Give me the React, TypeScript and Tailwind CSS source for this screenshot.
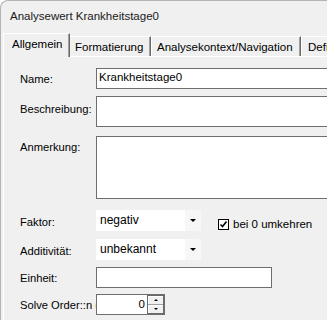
import React from "react";

function Combo({ value }: { value: string }) {
  return (
    <div className="flex h-[21px] w-[105px] bg-white">
      <div className="flex-1 pl-[4px] leading-[21px] text-[12px] text-black">{value}</div>
      <div className="flex w-[16px] items-center justify-center bg-[#f7f7f7]">
        <div className="h-0 w-0 border-l-[3px] border-r-[3px] border-t-[3px] border-l-transparent border-r-transparent border-t-black" />
      </div>
    </div>
  );
}

function Label({ text, mt }: { text: string; mt: string }) {
  return (
    <div className={`w-[76px] shrink-0 overflow-hidden whitespace-nowrap text-[11.2px] leading-[16px] text-black ${mt}`}>
      {text}
    </div>
  );
}

export default function App() {
  return (
    <div
      className="h-[320px] w-[327px] overflow-hidden rounded-tl-[8px] border-l border-t border-[#b4b4b4] bg-[#f0f0f0] text-black"
      style={{ fontFamily: "'Liberation Sans', Arial, sans-serif" }}
    >
      <div className="h-[32px] pl-[9px] pt-[7px] text-[11.5px] leading-[16px] text-[#1a1a1a]">
        Analysewert Krankheitstage0
      </div>
      <div className="relative z-10 flex h-[23px] items-end pl-[2px] text-[11.5px] leading-[16px] whitespace-nowrap">
        <div className="-mb-px h-[24px] w-[67px] shrink-0 border-l border-t border-r border-l-white border-t-white border-r-[#696969] bg-[#f0f0f0] pl-[8px] pt-[2px] shadow-[inset_-1px_0_0_#a0a0a0]">
          Allgemein
        </div>
        <div className="h-[20px] w-[81px] shrink-0 border-t border-r border-t-white border-r-[#696969] pl-[5px] pt-[2px] shadow-[inset_-1px_0_0_#a0a0a0]">
          Formatierung
        </div>
        <div className="h-[20px] w-[150px] shrink-0 border-l border-t border-r border-l-white border-t-white border-r-[#696969] pl-[5px] pt-[2px] shadow-[inset_-1px_0_0_#a0a0a0]">
          Analysekontext/Navigation
        </div>
        <div className="h-[20px] w-[70px] shrink-0 border-l border-t border-l-white border-t-white pl-[6px] pt-[2px]">
          Definition
        </div>
      </div>
      <div className="ml-[2px] h-[300px] border-l border-t border-white pl-[16px] pt-[11px]">
        <div className="flex items-start">
          <Label text="Name:" mt="mt-[3px]" />
          <div className="h-[21px] w-[240px] shrink-0 border border-[#6e6e6e] bg-white pl-[2px] text-[11.5px] leading-[17px]">
            Krankheitstage0
          </div>
        </div>
        <div className="mt-[7px] flex items-start">
          <Label text="Beschreibung:" mt="mt-[5px]" />
          <div className="h-[31px] w-[240px] shrink-0 border border-[#6e6e6e] bg-white" />
        </div>
        <div className="mt-[9px] flex items-start">
          <Label text="Anmerkung:" mt="mt-[3px]" />
          <div className="h-[63px] w-[240px] shrink-0 border border-[#6e6e6e] bg-white" />
        </div>
        <div className="mt-[11px] flex items-start">
          <Label text="Faktor:" mt="mt-[4px]" />
          <Combo value="negativ" />
          <div className="ml-[17px] mt-[6px] flex items-center">
            <div className="flex h-[11px] w-[11px] items-center justify-center border border-black bg-white">
              <svg width="9" height="9" viewBox="0 0 9 9">
                <path d="M1.5 4.5 L3.5 6.5 L7.5 1.5" fill="none" stroke="#000" strokeWidth="1.6" />
              </svg>
            </div>
            <span className="ml-[4px] text-[11.5px] leading-[16px]">bei 0 umkehren</span>
          </div>
        </div>
        <div className="mt-[7px] flex items-start">
          <Label text="Additivität:" mt="mt-[4px]" />
          <Combo value="unbekannt" />
        </div>
        <div className="mt-[7px] flex items-start">
          <Label text="Einheit:" mt="mt-[3px]" />
          <div className="h-[21px] w-[176px] shrink-0 border border-[#6e6e6e] bg-white" />
        </div>
        <div className="mt-[6px] flex items-start">
          <Label text="Solve Order::n (Lösungsreihenfolge):" mt="mt-[3px]" />
          <div className="flex h-[21px] w-[69px] shrink-0 border border-[#6e6e6e] bg-white">
            <div className="flex-1 pr-[2px] text-right text-[11.5px] leading-[19px]">0</div>
            <div className="flex w-[17px] flex-col border border-[#696969] bg-[#f0f0f0]">
              <div className="flex flex-1 items-center justify-center border-b border-[#a0a0a0] shadow-[inset_1px_1px_0_#fff]">
                <div className="h-0 w-0 border-b-[2px] border-l-[2px] border-r-[2px] border-b-black border-l-transparent border-r-transparent" />
              </div>
              <div className="flex flex-1 items-center justify-center shadow-[inset_1px_1px_0_#fff]">
                <div className="h-0 w-0 border-l-[2px] border-r-[2px] border-t-[2px] border-l-transparent border-r-transparent border-t-black" />
              </div>
            </div>
          </div>
        </div>
      </div>
    </div>
  );
}
